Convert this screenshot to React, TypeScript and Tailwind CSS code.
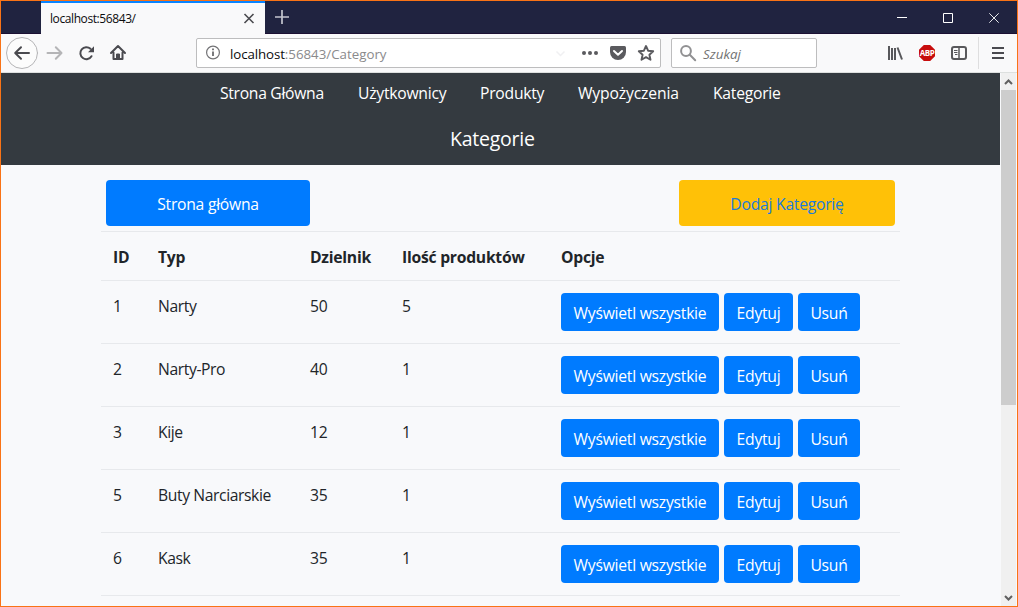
import React from 'react';

type Category = { id: number; type: string; divisor: number; count: number };

const categories: Category[] = [
  { id: 1, type: 'Narty', divisor: 50, count: 5 },
  { id: 2, type: 'Narty-Pro', divisor: 40, count: 1 },
  { id: 3, type: 'Kije', divisor: 12, count: 1 },
  { id: 5, type: 'Buty Narciarskie', divisor: 35, count: 1 },
  { id: 6, type: 'Kask', divisor: 35, count: 1 },
];

function TitleBar() {
  return (
    <div className="flex h-[33px] shrink-0 border-b border-[#1b1033] bg-[#202340]">
      <div className="relative -mb-px ml-10 flex h-[33px] w-[224px] items-center border-t-2 border-[#0a84ff] bg-[#f9f9fa] pl-[9px] pr-2.5">
        <span className="text-[12px] tracking-[-0.41px] text-[#0c0c0d]">localhost:56843/</span>
        <svg className="ml-auto h-3 w-3" viewBox="0 0 12 12" fill="none" stroke="#4a4a4f" strokeWidth="1.6">
          <path d="M1.5 1l9 9M10.5 1l-9 9" />
        </svg>
      </div>
      <svg className="ml-2.5 mt-2 h-4 w-4" viewBox="0 0 16 16" stroke="#c4c5ce" strokeWidth="1.7">
        <path d="M7 1v14M0 8h14" />
      </svg>
      <div className="ml-auto flex">
        <svg className="h-8 w-[46px]" viewBox="0 0 46 32" stroke="#fff" fill="none">
          <path d="M18 16.5h10" />
        </svg>
        <svg className="h-8 w-[46px]" viewBox="0 0 46 32" stroke="#fff" fill="none">
          <path d="M18.5 12.5h9v9h-9z" />
        </svg>
        <svg className="h-8 w-[46px]" viewBox="0 0 46 32" stroke="#fff" fill="none" strokeWidth="0.9">
          <path d="M18.3 12.3l9.4 9.4M27.7 12.3l-9.4 9.4" />
        </svg>
      </div>
    </div>
  );
}

function ToolBar() {
  return (
    <div className="flex h-[39px] shrink-0 items-center border-b border-[#dde0df] bg-[#f9f9fa]">
      <svg className="h-[34px] w-[130px]" viewBox="0 0 130 34" fill="none" stroke="#4a4a4f" strokeWidth="2" strokeLinecap="round" strokeLinejoin="round">
        <circle cx="21" cy="17" r="15.5" fill="#fcfcfc" stroke="#b5b5b7" strokeWidth="1" />
        <path d="M28 17H14.5M20 11.2L14.2 17l5.8 5.8" />
        <path d="M46.500 17H60M54.800 11.200L60.500 17l-5.700 5.800" stroke="#b5b5b7" />
        <path d="M90.500 20.200A6 6 0 1 1 89.500 12.800" />
        <path d="M93 10.300v6h-6z" fill="#4a4a4f" stroke="none" />
        <path d="M110 17l7-7 7 7M112.500 16.500V23h9v-6.500" />
        <path d="M115.500 23v-5h3v5z" fill="#4a4a4f" stroke="#4a4a4f" strokeWidth="1" />
      </svg>
      <div className="ml-[65px] flex h-[30px] w-[465px] items-center rounded-[2px] border border-[#bdbdbe] bg-white">
        <svg className="ml-[9px] h-4 w-4" viewBox="0 0 16 16" fill="none" stroke="#737376" strokeWidth="1.2">
          <circle cx="7" cy="7.500" r="6.400" />
          <path d="M7 6.500v4.500M7 3.500v1.700" strokeWidth="1.900" />
        </svg>
        <span className="ml-2 pt-px text-[13.3px] leading-5 text-[#8a8a8c]">
          <span className="tracking-[-0.1px] text-[#0c0c0d]">localhost</span>:56843/Category
        </span>
        <svg className="ml-auto h-7 w-[108px]" viewBox="0 0 108 28" fill="none">
          <path d="M4.500 12.500l4 4 4-4" stroke="#f0f0f2" strokeWidth="1.500" />
          <circle cx="32" cy="14" r="2" fill="#5a5a5e" />
          <circle cx="38" cy="14" r="2" fill="#5a5a5e" />
          <circle cx="44" cy="14" r="2" fill="#5a5a5e" />
          <path d="M59.500 7h13a1.500 1.500 0 0 1 1.500 1.500V13a8 8 0 0 1-16 0V8.500A1.500 1.500 0 0 1 59.500 7z" fill="#5a5a5e" />
          <path d="M62 12l4 3.800 4-3.800" stroke="#fff" strokeWidth="2" strokeLinecap="round" strokeLinejoin="round" />
          <path d="M94 7l2.100 4.700 5.100.5-3.800 3.500 1.100 5-4.500-2.600-4.500 2.600 1.100-5-3.800-3.500 5.100-.5z" stroke="#5a5a5e" strokeWidth="1.900" strokeLinejoin="round" />
        </svg>
      </div>
      <div className="ml-2.5 flex h-[30px] w-[146px] items-center rounded-[2px] border border-[#bdbdbe] bg-white">
        <svg className="ml-2 h-[17px] w-[17px]" viewBox="0 0 17 17" fill="none" stroke="#919193" strokeWidth="2">
          <circle cx="6" cy="6" r="4.900" />
          <path d="M9.800 9.800l5.400 5.400" strokeLinecap="round" />
        </svg>
        <span className="ml-1.5 pt-px text-[13.4px] italic leading-5 text-[#737373]">Szukaj</span>
      </div>
      <div className="ml-auto flex items-center">
        <svg className="h-[18px] w-[18px]" viewBox="0 0 18 18" stroke="#58585b" strokeWidth="2" fill="none">
          <path d="M2 2v14M5 4v12M8 4v12M10.500 3.500l4.500 12" />
        </svg>
        <span className="ml-3.5 flex h-4 w-4 items-center justify-center bg-[#c70d0d] text-[8px] font-bold leading-none tracking-[-0.5px] text-white [clip-path:polygon(30%_0,70%_0,100%_30%,100%_70%,70%_100%,30%_100%,0_70%,0_30%)]">
          ABP
        </span>
        <svg className="ml-[15px] h-[18px] w-[18px]" viewBox="0 0 18 18" fill="none" stroke="#58585b" strokeWidth="2">
          <rect x="2" y="3" width="14" height="12" rx="2" />
          <path d="M9 3v12" strokeWidth="1.500" />
          <path d="M4 6.500h3.500M4 8.500h3.500M5 10.500h2.500" strokeWidth="1" />
        </svg>
        <span className="ml-2.5 h-8 w-px bg-[#dededf]" />
        <svg className="ml-[13px] mr-[13px] h-3 w-3" viewBox="0 0 12 12" stroke="#4a4a4f" strokeWidth="2">
          <path d="M0 1h12M0 6h12M0 11h12" />
        </svg>
      </div>
    </div>
  );
}

function ActionButton({ label, className }: { label: string; className: string }) {
  return (
    <button className={`flex h-[38px] items-center justify-center whitespace-nowrap rounded-[4px] bg-[#007bff] pt-[2px] text-white ${className}`}>
      {label}
    </button>
  );
}

function CategoryTable() {
  const grid = 'grid grid-cols-[45px_152px_92px_159px_1fr] border-t border-[#e7e9ec] pl-3';
  return (
    <div className="mt-[5px] w-[799px]">
      <div className={`${grid} h-[49px] pt-[13px] font-bold`}>
        <span>ID</span>
        <span>Typ</span>
        <span>Dzielnik</span>
        <span>Ilość produktów</span>
        <span>Opcje</span>
      </div>
      {categories.map((c) => (
        <div key={c.id} className={`${grid} h-[63px] pt-3`}>
          <span className="pt-px">{c.id}</span>
          <span className="pt-px tracking-[-0.4px]">{c.type}</span>
          <span className="pt-px">{c.divisor}</span>
          <span className="pt-px">{c.count}</span>
          <div className="flex gap-[5px]">
            <ActionButton label="Wyświetl wszystkie" className="w-[158px]" />
            <ActionButton label="Edytuj" className="w-[69px]" />
            <ActionButton label="Usuń" className="w-[62px]" />
          </div>
        </div>
      ))}
      <div className="border-t border-[#e7e9ec]" />
    </div>
  );
}

function ScrollBar() {
  return (
    <div className="ml-px flex w-[15px] shrink-0 flex-col bg-[#f0f0f0]">
      <svg className="h-[17px] w-[15px]" viewBox="0 0 15 17" fill="none" stroke="#606060" strokeWidth="2">
        <path d="M4 11L7.500 7.500l3.500 3.500" />
      </svg>
      <div className="h-[315px] bg-[#cdcdcd]" />
      <svg className="mt-auto h-[17px] w-[15px]" viewBox="0 0 15 17" fill="none" stroke="#606060" strokeWidth="2">
        <path d="M4 7l3.500 3.500L11 7" />
      </svg>
    </div>
  );
}

export default function App() {
  return (
    <div className="flex h-[607px] w-[1018px] flex-col overflow-hidden border border-[#f97316] bg-[#f8f9fb] font-['Open_Sans',sans-serif]">
      <TitleBar />
      <ToolBar />
      <div className="flex min-h-0 flex-1">
        <div className="w-[999px] overflow-hidden text-[15.7px] leading-6 tracking-[-0.25px] text-[#212529]">
          <header className="h-[92px] bg-[#343a40] pt-2 text-white">
            <nav className="flex pl-[219px]">
              <a className="w-[138px] tracking-[-0.3px]">Strona Główna</a>
              <a className="w-[122px]">Użytkownicy</a>
              <a className="w-[98px]">Produkty</a>
              <a className="w-[135px] tracking-[-0.15px]">Wypożyczenia</a>
              <a>Kategorie</a>
            </nav>
            <h1 className="mt-[19px] pl-[449px] text-[19.5px] leading-[30px]">Kategorie</h1>
          </header>
          <main className="pl-[100px]">
            <div className="flex w-[794px] justify-between pl-[5px] pt-[15px]">
              <a className="flex h-[46px] w-[204px] items-center justify-center rounded-[4px] bg-[#007bff] pt-[2px] text-white">Strona główna</a>
              <a className="flex h-[46px] w-[216px] items-center justify-center rounded-[4px] bg-[#ffc107] pt-[2px] text-[#1b7bdb]">Dodaj Kategorię</a>
            </div>
            <CategoryTable />
          </main>
        </div>
        <ScrollBar />
      </div>
    </div>
  );
}
